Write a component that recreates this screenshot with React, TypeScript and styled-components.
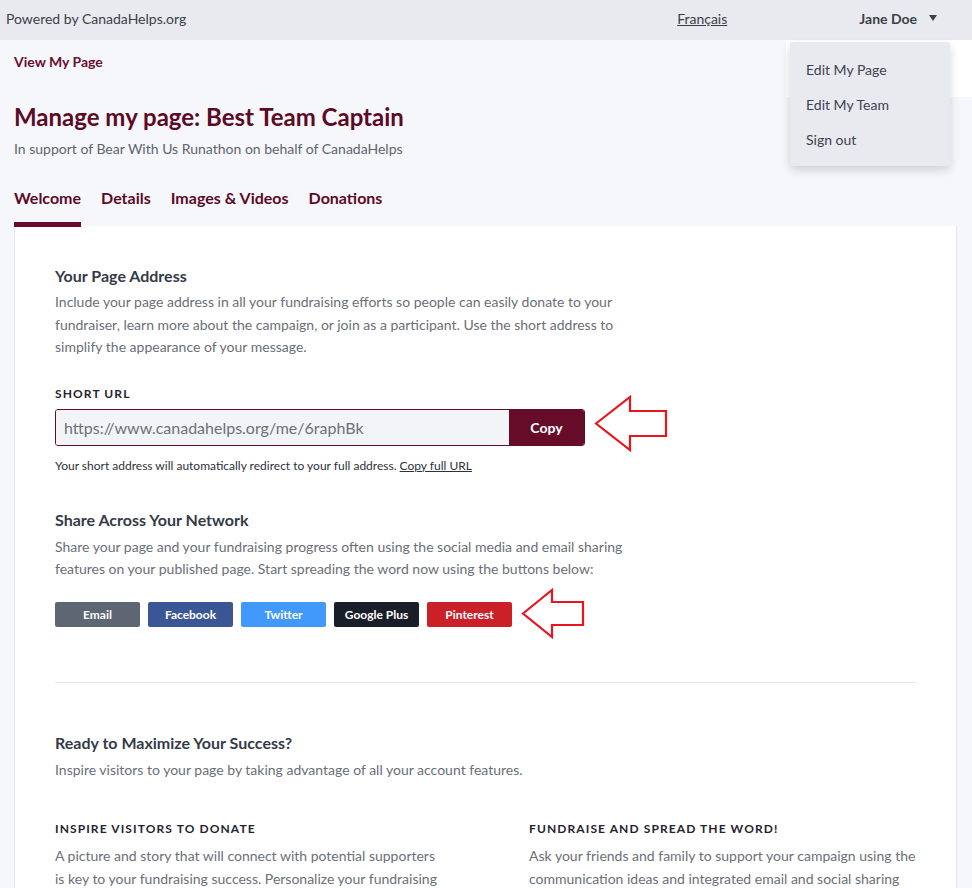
import React from "react";
import styled, { createGlobalStyle } from "styled-components";

const Global = createGlobalStyle`
  html, body { margin: 0; padding: 0; }
  body {
    background: #f6f7fa;
    font-family: Lato, "Open Sans", "Liberation Sans", sans-serif;
    color: #333a45;
  }
  * { box-sizing: border-box; }
`;

const Page = styled.div`
  position: relative;
  min-height: 888px;
`;

const TopBar = styled.header`
  height: 40px;
  background: #e9eaef;
  display: flex;
  align-items: center;
  padding: 0 35px 4px 6px;
  font-size: 14px;
  color: #3b3f46;
`;

const Powered = styled.span`
  flex: 1;
`;

const Lang = styled.a`
  color: #3b3f46;
  text-decoration: underline;
  margin-right: 132px;
`;

const User = styled.span`
  font-weight: 700;
  display: flex;
  align-items: center;
  gap: 12px;
  padding-top: 1px;
`;

const Caret = styled.span`
  width: 0;
  height: 0;
  border-left: 4px solid transparent;
  border-right: 4px solid transparent;
  border-top: 6px solid #3b3f46;
  margin-top: -2px;
`;

const MenuLayer = styled.div`
  position: absolute;
  top: 40px;
  right: 0;
  width: 186px;
  height: 57px;
  background: #ffffff;
`;

const Menu = styled.ul`
  position: absolute;
  top: 2px;
  left: 4px;
  width: 160px;
  margin: 0;
  padding: 10px 0 9px;
  list-style: none;
  background: #e9eaef;
  border-radius: 3px;
  box-shadow: 0 4px 10px rgba(30, 35, 50, 0.18);
`;

const MenuItem = styled.li`
  line-height: 35px;
  padding-left: 16px;
  font-size: 14px;
  color: #3b4250;
`;

const Main = styled.main`
  padding: 0 15px 40px 14px;
`;

const ViewLink = styled.a`
  display: block;
  padding-top: 13px;
  font-size: 14px;
  font-weight: 700;
  line-height: 18px;
  color: #6b0f2e;
  text-decoration: none;
`;

const Title = styled.h1`
  margin: 31px 0 0;
  font-size: 24px;
  line-height: 30px;
  font-weight: 700;
  color: #5c0a26;
`;

const Subtitle = styled.p`
  margin: 7px 0 0;
  font-size: 14px;
  line-height: 20px;
  color: #5d6472;
`;

const Tabs = styled.nav`
  display: flex;
  gap: 20px;
  margin-top: 29px;
`;

const Tab = styled.a<{ $active?: boolean }>`
  font-size: 16px;
  font-weight: 700;
  color: #5c0a26;
  line-height: 20px;
  padding-bottom: 14px;
  border-bottom: 5px solid ${(p) => (p.$active ? "#660c29" : "transparent")};
  text-decoration: none;
`;

const Card = styled.section`
  background: #ffffff;
  border: 1px solid #e4e6eb;
  border-top: none;
  margin-top: -1px;
  padding: 40px 40px 40px;
`;

const Heading = styled.h2`
  margin: 0;
  font-size: 16px;
  line-height: 20px;
  font-weight: 700;
  color: #343b47;
`;

const Para = styled.p<{ $width?: number; $top?: number }>`
  margin: ${(p) => p.$top ?? 5}px 0 0;
  max-width: ${(p) => p.$width ?? 570}px;
  font-size: 14px;
  line-height: 22.5px;
  color: #6a6f78;
`;

const Label = styled.div<{ $top?: number }>`
  margin-top: ${(p) => p.$top ?? 27}px;
  font-size: 12px;
  font-weight: 700;
  line-height: 16px;
  letter-spacing: 1.1px;
  text-transform: uppercase;
  color: #1f2430;
`;

const UrlRow = styled.div`
  display: flex;
  align-items: center;
  margin-top: 7px;
`;

const UrlGroup = styled.div`
  display: flex;
  width: 530px;
  height: 37px;
  border: 1px solid #660c29;
  border-radius: 3px;
  overflow: hidden;
`;

const UrlInput = styled.input`
  flex: 1;
  border: none;
  background: #f3f4f7;
  font-family: inherit;
  font-size: 16px;
  color: #6c7078;
  padding: 0 8px;
  outline: none;
`;

const CopyBtn = styled.button`
  width: 75px;
  border: none;
  background: #660c29;
  color: #fff;
  font-family: inherit;
  font-size: 14px;
  font-weight: 700;
`;

const Arrow = styled.svg<{ $gap: number; $shift: number }>`
  margin: -20px 0 -20px ${(p) => p.$gap}px;
  position: relative;
  top: ${(p) => p.$shift}px;
  flex: none;
`;

const Helper = styled.p`
  margin: 12px 0 0;
  font-size: 12px;
  line-height: 15px;
  color: #2c313a;
`;

const HelperLink = styled.a`
  color: #2c313a;
  text-decoration: underline;
`;

const Section = styled.div<{ $top: number }>`
  margin-top: ${(p) => p.$top}px;
`;

const ShareRow = styled.div`
  display: flex;
  align-items: center;
  gap: 8px;
  margin-top: 21px;
`;

const ShareBtn = styled.button<{ $bg: string }>`
  width: 85px;
  height: 25px;
  border: none;
  border-radius: 2px;
  background: ${(p) => p.$bg};
  color: #fff;
  font-family: inherit;
  font-size: 12px;
  font-weight: 700;
  padding: 0;
`;

const Divider = styled.hr`
  margin: 55px 0 0;
  border: none;
  border-top: 1px solid #e6e8ec;
`;

const Columns = styled.div`
  display: grid;
  grid-template-columns: 430px 1fr;
  gap: 44px;
  margin-top: 40px;
`;

const Column = styled.div``;

const ArrowIcon = ({ w, h, gap, shift }: { w: number; h: number; gap: number; shift: number }) => {
  const headX = Math.round(w * 0.48);
  const shaftTop = Math.round(h * 0.26);
  const shaftBot = Math.round(h * 0.74);
  return (
    <Arrow $gap={gap} $shift={shift} width={w + 4} height={h + 4} viewBox={`-2 -2 ${w + 4} ${h + 4}`}>
      <polygon
        points={`0,${h / 2} ${headX},0 ${headX},${shaftTop} ${w},${shaftTop} ${w},${shaftBot} ${headX},${shaftBot} ${headX},${h}`}
        fill="#ffffff"
        stroke="#e8141e"
        strokeWidth={2.2}
      />
    </Arrow>
  );
};

const shares = [
  { label: "Email", bg: "#5e6674" },
  { label: "Facebook", bg: "#3b5695" },
  { label: "Twitter", bg: "#4199fb" },
  { label: "Google Plus", bg: "#1a1e29" },
  { label: "Pinterest", bg: "#cb2028" },
];

export default function App() {
  return (
    <Page>
      <Global />
      <TopBar>
        <Powered>Powered by CanadaHelps.org</Powered>
        <Lang href="#">Français</Lang>
        <User>
          Jane Doe <Caret />
        </User>
      </TopBar>
      <MenuLayer>
        <Menu>
          <MenuItem>Edit My Page</MenuItem>
          <MenuItem>Edit My Team</MenuItem>
          <MenuItem>Sign out</MenuItem>
        </Menu>
      </MenuLayer>
      <Main>
        <ViewLink href="#">View My Page</ViewLink>
        <Title>Manage my page: Best Team Captain</Title>
        <Subtitle>In support of Bear With Us Runathon on behalf of CanadaHelps</Subtitle>
        <Tabs>
          <Tab $active>Welcome</Tab>
          <Tab>Details</Tab>
          <Tab>Images &amp; Videos</Tab>
          <Tab>Donations</Tab>
        </Tabs>
        <Card>
          <Heading>Your Page Address</Heading>
          <Para>
            Include your page address in all your fundraising efforts so people can easily donate to your
            fundraiser, learn more about the campaign, or join as a participant. Use the short address to
            simplify the appearance of your message.
          </Para>
          <Label>Short URL</Label>
          <UrlRow>
            <UrlGroup>
              <UrlInput readOnly value="https://www.canadahelps.org/me/6raphBk" />
              <CopyBtn>Copy</CopyBtn>
            </UrlGroup>
            <ArrowIcon w={70} h={53} gap={9} shift={-4} />
          </UrlRow>
          <Helper>
            Your short address will automatically redirect to your full address.{" "}
            <HelperLink href="#">Copy full URL</HelperLink>
          </Helper>

          <Section $top={37}>
            <Heading>Share Across Your Network</Heading>
            <Para $top={6}>
              Share your page and your fundraising progress often using the social media and email sharing
              features on your published page. Start spreading the word now using the buttons below:
            </Para>
            <ShareRow>
              {shares.map((s) => (
                <ShareBtn key={s.label} $bg={s.bg}>
                  {s.label}
                </ShareBtn>
              ))}
              <ArrowIcon w={60} h={47} gap={1} shift={-1} />
            </ShareRow>
          </Section>

          <Divider />

          <Section $top={50}>
            <Heading>Ready to Maximize Your Success?</Heading>
            <Para $top={6} $width={700}>
              Inspire visitors to your page by taking advantage of all your account features.
            </Para>
          </Section>

          <Columns>
            <Column>
              <Label $top={0}>Inspire visitors to donate</Label>
              <Para $top={8} $width={385}>
                A picture and story that will connect with potential supporters is key to your fundraising
                success. Personalize your fundraising page with a photo, a video and your own story to help
                visitors understand why this cause matters to you.
              </Para>
            </Column>
            <Column>
              <Label $top={0}>Fundraise and spread the word!</Label>
              <Para $top={8} $width={390}>
                Ask your friends and family to support your campaign using the communication ideas and
                integrated email and social sharing tools available to you on your page.
              </Para>
            </Column>
          </Columns>
        </Card>
      </Main>
    </Page>
  );
}
